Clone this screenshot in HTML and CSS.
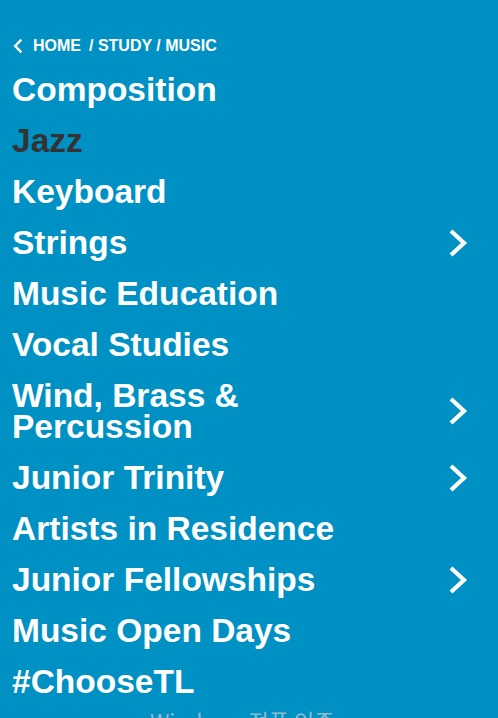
FILE: index.html
```html
<!DOCTYPE html>
<html lang="en">
<head>
<meta charset="utf-8">
<title>Music</title>
<link rel="stylesheet" href="styles.css">
</head>
<body>
<nav class="menu">
  <div class="crumbs">
    <a class="back" href="#"><svg class="back-icon" viewBox="0 0 9 14" width="9" height="14"><path d="M7.5 1.5 L2.2 7 L7.5 12.5" fill="none" stroke="#fff" stroke-width="2.5" stroke-linecap="square"/></svg><span>HOME</span></a>
    <span class="trail">/ STUDY / MUSIC</span>
  </div>
  <ul class="items">
    <li class="item"><a href="#">Composition</a></li>
    <li class="item active"><a href="#">Jazz</a></li>
    <li class="item"><a href="#">Keyboard</a></li>
    <li class="item"><a href="#">Strings</a><svg class="chev" viewBox="0 0 22 30" width="22" height="30"><path d="M4 3 L17 15 L4 27" fill="none" stroke="#fff" stroke-width="4.2"/></svg></li>
    <li class="item"><a href="#">Music Education</a></li>
    <li class="item"><a href="#">Vocal Studies</a></li>
    <li class="item"><a href="#">Wind, Brass &amp;<br>Percussion</a><svg class="chev" viewBox="0 0 22 30" width="22" height="30"><path d="M4 3 L17 15 L4 27" fill="none" stroke="#fff" stroke-width="4.2"/></svg></li>
    <li class="item"><a href="#">Junior Trinity</a><svg class="chev" viewBox="0 0 22 30" width="22" height="30"><path d="M4 3 L17 15 L4 27" fill="none" stroke="#fff" stroke-width="4.2"/></svg></li>
    <li class="item"><a href="#">Artists in Residence</a></li>
    <li class="item"><a href="#">Junior Fellowships</a><svg class="chev" viewBox="0 0 22 30" width="22" height="30"><path d="M4 3 L17 15 L4 27" fill="none" stroke="#fff" stroke-width="4.2"/></svg></li>
    <li class="item"><a href="#">Music Open Days</a></li>
    <li class="item"><a href="#">#ChooseTL</a></li>
  </ul>
</nav>
<div class="watermark">Windows 정품 인증</div>
</body>
</html>
```
FILE: styles.css
```css
html, body {
  margin: 0;
  padding: 0;
  height: 100%;
  overflow: hidden;
}
body {
  background: #0091c4;
  font-family: "Liberation Sans", Arial, sans-serif;
  color: #fff;
  position: relative;
}
.menu {
  padding: 36px 0 0 12px;
}
.crumbs {
  display: flex;
  align-items: center;
  font-size: 16px;
  font-weight: bold;
  line-height: 20px;
  height: 20px;
}
.crumbs a {
  color: #fff;
  text-decoration: none;
  display: flex;
  align-items: center;
}
.back-icon {
  margin-left: 1px;
  margin-right: 11px;
  margin-top: -1px;
}
.trail {
  margin-left: 8px;
}
.items {
  list-style: none;
  margin: 8px 0 0 0;
  padding: 0;
}
.item {
  display: flex;
  align-items: center;
  justify-content: space-between;
  padding: 10px 29px 10px 0;
  font-size: 33.5px;
  font-weight: bold;
  line-height: 31px;
}
.item a {
  color: #fff;
  text-decoration: none;
}
.item.active a {
  color: #333;
}
.chev {
  flex: none;
  margin-top: 0;
}
.watermark {
  position: absolute;
  left: 150px;
  top: 704px;
  font-family: "Noto Sans CJK KR", "Liberation Sans", sans-serif;
  font-size: 22px;
  color: rgba(190, 200, 210, 0.75);
  white-space: nowrap;
}
```
